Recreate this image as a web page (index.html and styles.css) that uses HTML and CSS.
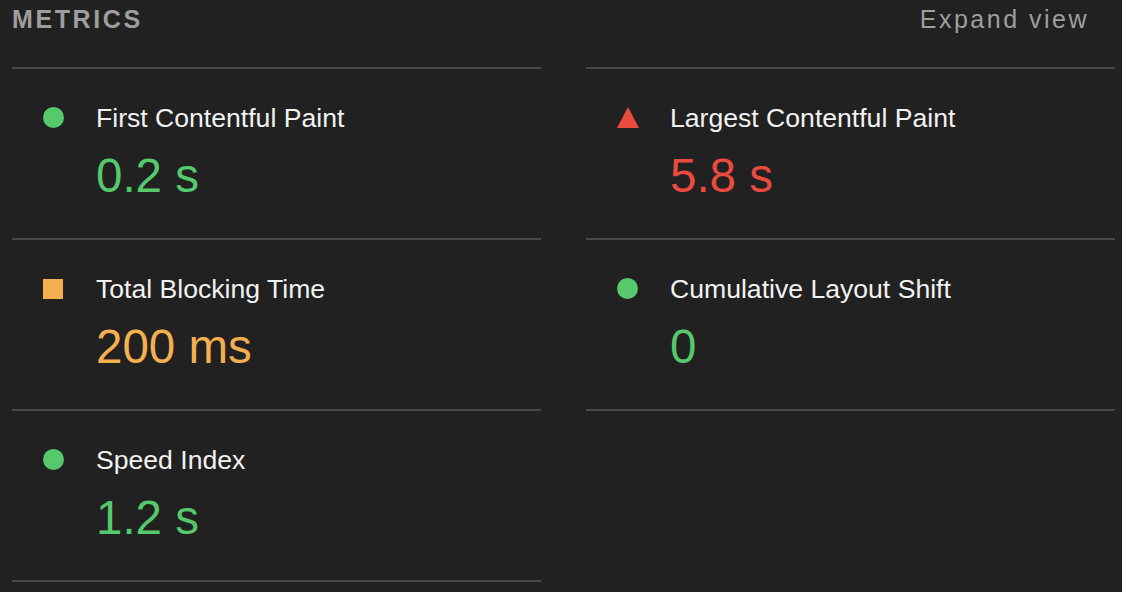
FILE: index.html
```html
<!DOCTYPE html>
<html lang="en">
<head>
<meta charset="utf-8">
<title>Metrics</title>
<link rel="stylesheet" href="styles.css">
</head>
<body>
<section class="metrics">
  <header class="metrics-header">
    <h2 class="metrics-title">METRICS</h2>
    <button class="metrics-toggle">Expand view</button>
  </header>
  <div class="metrics-grid">
    <div class="metrics-column">
      <div class="metric">
        <span class="metric-icon icon-pass"></span>
        <div class="metric-body">
          <div class="metric-title">First Contentful Paint</div>
          <div class="metric-value value-pass">0.2&nbsp;s</div>
        </div>
      </div>
      <div class="metric">
        <span class="metric-icon icon-average"></span>
        <div class="metric-body">
          <div class="metric-title">Total Blocking Time</div>
          <div class="metric-value value-average">200&nbsp;ms</div>
        </div>
      </div>
      <div class="metric">
        <span class="metric-icon icon-pass"></span>
        <div class="metric-body">
          <div class="metric-title">Speed Index</div>
          <div class="metric-value value-pass">1.2&nbsp;s</div>
        </div>
      </div>
    </div>
    <div class="metrics-column">
      <div class="metric">
        <span class="metric-icon icon-fail"></span>
        <div class="metric-body">
          <div class="metric-title">Largest Contentful Paint</div>
          <div class="metric-value value-fail">5.8&nbsp;s</div>
        </div>
      </div>
      <div class="metric">
        <span class="metric-icon icon-pass"></span>
        <div class="metric-body">
          <div class="metric-title">Cumulative Layout Shift</div>
          <div class="metric-value value-pass">0</div>
        </div>
      </div>
    </div>
  </div>
</section>
</body>
</html>
```
FILE: styles.css
```css
html, body {
  margin: 0;
  padding: 0;
  background: #212121;
}

body {
  font-family: "Liberation Sans", Arial, Helvetica, sans-serif;
  color: #f0f0f0;
}

.metrics {
  padding: 0 7px 0 12px;
}

.metrics-header {
  display: flex;
  justify-content: space-between;
  align-items: flex-start;
  padding-top: 4px;
  height: 63px;
}

.metrics-title {
  margin: 0;
  font-size: 25px;
  line-height: 30px;
  font-weight: bold;
  letter-spacing: 2.6px;
  color: #9e9e9e;
}

.metrics-toggle {
  margin: 0 26px 0 0;
  padding: 0;
  border: 0;
  background: none;
  font-family: inherit;
  font-size: 25px;
  line-height: 30px;
  letter-spacing: 2.5px;
  color: #9e9e9e;
}

.metrics-grid {
  display: grid;
  grid-template-columns: 529px 529px;
  column-gap: 45px;
  align-items: start;
}

.metrics-column {
  border-bottom: 2px solid #484848;
}

.metric {
  display: flex;
  align-items: flex-start;
  gap: 32px;
  border-top: 2px solid #484848;
  padding: 34px 0 35px 31px;
  height: 100px;
}

.metric-icon {
  flex: none;
  width: 21px;
  height: 21px;
  margin-top: 4px;
}

.icon-pass {
  border-radius: 50%;
  background: #55c96c;
}

.icon-average {
  width: 20px;
  height: 20px;
  margin-top: 5px;
  margin-right: 1px;
  background: #f4b04f;
}

.icon-fail {
  width: 0;
  height: 0;
  border-left: 11px solid transparent;
  border-right: 11px solid transparent;
  border-bottom: 21px solid #eb4a3e;
  margin-top: 4px;
  margin-right: -1px;
}

.metric-title {
  font-size: 26.6px;
  line-height: 30px;
  color: #f2f2f2;
}

.metric-value {
  margin-top: 16px;
  font-size: 47.5px;
  line-height: 54px;
}

.value-pass { color: #55c96c; }
.value-average { color: #f4b04f; }
.value-fail { color: #eb4a3e; }
```
